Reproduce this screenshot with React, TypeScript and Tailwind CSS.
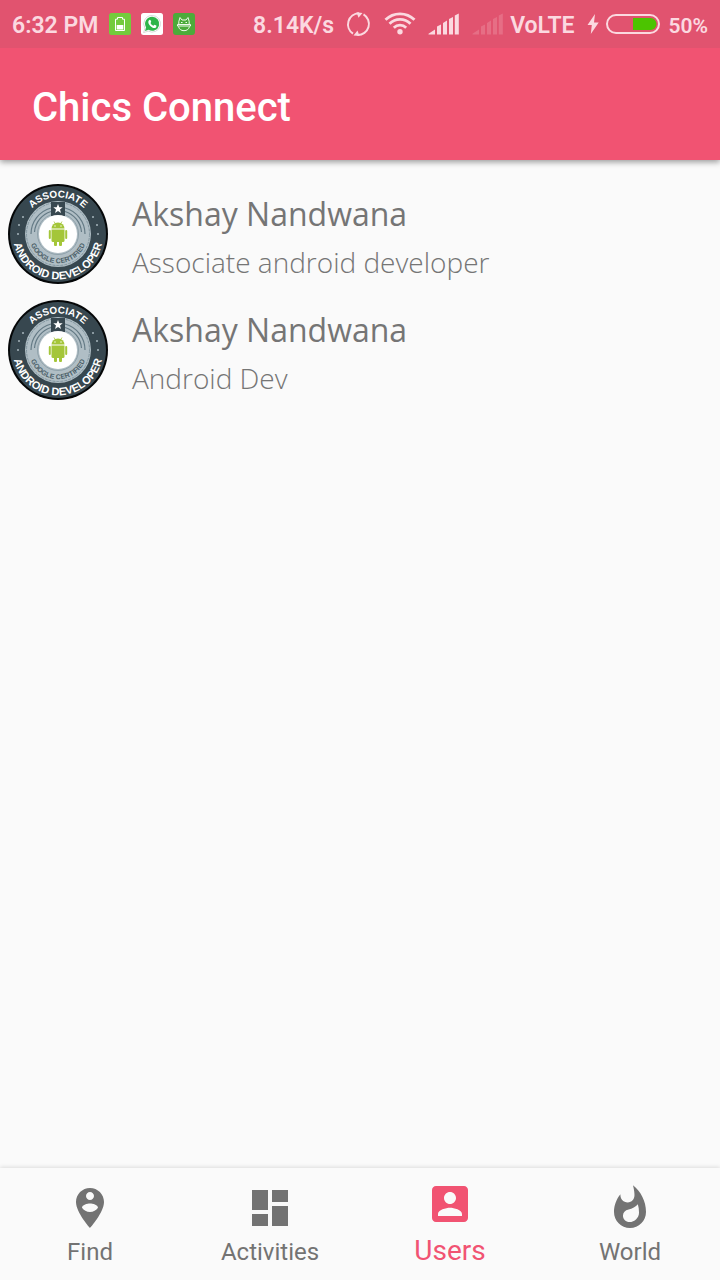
import { useId } from "react";

const users = [
  { name: "Akshay Nandwana", role: "Associate android developer" },
  { name: "Akshay Nandwana", role: "Android Dev" },
];

const tabs = [
  {
    label: "Find",
    path: "M12 2C8.14 2 5 5.14 5 9c0 5.25 7 13 7 13s7-7.75 7-13c0-3.86-3.14-7-7-7zm0 2c1.1 0 2 .9 2 2 0 1.11-.9 2-2 2s-2-.89-2-2c0-1.1.9-2 2-2zm0 10c-1.67 0-3.14-.85-4-2.15.02-1.32 2.67-2.05 4-2.05s3.98.73 4 2.05c-.86 1.3-2.33 2.15-4 2.15z",
  },
  {
    label: "Activities",
    path: "M3 13h8V3H3v10zm0 8h8v-6H3v6zm10 0h8V11h-8v10zm0-18v6h8V3h-8z",
  },
  {
    label: "Users",
    active: true,
    path: "M3 5v14c0 1.1.89 2 2 2h14c1.1 0 2-.9 2-2V5c0-1.1-.9-2-2-2H5c-1.11 0-2 .9-2 2zm12 4c0 1.66-1.34 3-3 3s-3-1.34-3-3 1.34-3 3-3 3 1.34 3 3zm-9 8c0-2 4-3.1 6-3.1s6 1.1 6 3.1v1H6v-1z",
  },
  {
    label: "World",
    path: "M13.5.67s.74 2.65.74 4.8c0 2.06-1.35 3.73-3.41 3.73-2.07 0-3.63-1.67-3.63-3.73l.03-.36C5.21 7.51 4 10.62 4 14c0 4.42 3.58 8 8 8s8-3.58 8-8C20 8.61 17.41 3.8 13.5.67zM11.71 19c-1.78 0-3.22-1.4-3.22-3.14 0-1.62 1.05-2.76 2.81-3.12 1.77-.36 3.6-1.21 4.62-2.58.39 1.29.59 2.65.59 4.04 0 2.65-2.15 4.8-4.8 4.8z",
  },
];

function BatteryAppIcon() {
  return (
    <svg className="size-6" viewBox="0 0 24 24" aria-hidden="true">
      <rect x="1" y="1" width="22" height="22" rx="2.5" fill="#73cb3c" />
      <path d="M9.5 5.5h5v1.700h2V18.500h-9V7.200h2z" fill="none" stroke="#fff" strokeWidth="1" />
      <path d="M8.700 13h6.600v4.500H8.700z" fill="#fff" />
    </svg>
  );
}

function WhatsAppIcon() {
  return (
    <svg className="size-6" viewBox="0 0 24 24" aria-hidden="true">
      <rect x="1" y="1" width="22" height="22" rx="2.5" fill="#fff" />
      <path d="M12.2 3.5a8.3 8.3 0 1 1-4 15.6L3.6 20.6 5 16.2a8.3 8.3 0 0 1 7.2-12.7z" fill="none" stroke="#c9c9c9" strokeWidth=".7" />
      <path d="M12.2 4.8a7 7 0 1 1-3.6 13L5 19l1.1-3.6A7 7 0 0 1 12.2 4.8z" fill="#2fb54a" />
      <path d="M9.400 8c.6-.4 1-.2 1.200.3l.6 1.400c.1.5-.7 1-.7 1.200.5 1.200 1.600 2.300 2.900 2.800.4 0 .8-1 1.200-.9l1.600.8c.5.3.2 1.400-.3 1.800-1.500 1.300-4 .1-5.600-1.500-1.600-1.500-3-4.500-.9-5.900z" fill="#fff" />
    </svg>
  );
}

function CatAppIcon() {
  return (
    <svg className="size-6" viewBox="0 0 24 24" aria-hidden="true">
      <rect x="1" y="1" width="22" height="22" rx="3" fill="#4cab3a" />
      <g fill="none" stroke="#f0faec" strokeWidth="1">
        <path d="M6.800 12.500V9.500L8 5.500l2 2.500h4l2-2.500 1.200 4v3" />
        <path d="M5.500 12.500h13v1.500h-13z" />
        <path d="M6.500 14.500c.6 2.700 2.700 4.200 5.500 4.200s4.900-1.500 5.500-4.200" />
        <path d="M9 10.500h1.500M13.500 10.500H15" />
      </g>
    </svg>
  );
}

function SyncIcon() {
  return (
    <svg className="size-7" viewBox="0 0 28 28" aria-hidden="true">
      <g fill="none" stroke="currentColor" strokeWidth="2">
        <path d="M9 23.700A11.200 11.200 0 0 1 15 3.200" />
        <path d="M19.500 4.300A11.200 11.200 0 0 1 13.500 25.100" />
      </g>
      <path d="M12.500 2.200 18.500 3 14.500 7.800zM15.500 26 9.500 25.500 13.500 20.500z" fill="currentColor" />
    </svg>
  );
}

function WifiIcon() {
  return (
    <svg className="h-6 w-8" viewBox="0 0 32 24" aria-hidden="true">
      <g fill="none" stroke="currentColor" strokeWidth="2.800">
        <path d="M1.500 7.800a20.500 20.500 0 0 1 29 0" />
        <path d="M5.500 11.700a14.800 14.800 0 0 1 21 0" />
        <path d="M9.800 15.700a8.800 8.800 0 0 1 12.400 0" />
      </g>
      <circle cx="16" cy="19.800" r="2.700" fill="currentColor" />
    </svg>
  );
}

function SignalIcon({ faded = false }: { faded?: boolean }) {
  return (
    <svg className={faded ? "h-6 w-8 opacity-20" : "h-6 w-8"} viewBox="0 0 32 24" aria-hidden="true">
      <path
        d="M.5 22.500v-.8L7 17.500v5zM9 22.500v-8l4-2v10zM15 22.500V11l4-2.500v14zM21 22.500V7l4-2v17.500zM26.800 22.500V3.500l4-2v21z"
        fill="currentColor"
      />
    </svg>
  );
}

function BoltIcon() {
  return (
    <svg className="h-6 w-3" viewBox="0 0 12 24" aria-hidden="true">
      <path d="M8 2 .5 13h4.300L3.800 22 11.700 10.500H7z" fill="currentColor" />
    </svg>
  );
}

function BatteryIcon() {
  return (
    <svg className="h-6 w-14" viewBox="0 0 56 24" aria-hidden="true">
      <rect x="2" y="3" width="52" height="18" rx="9" fill="none" stroke="currentColor" strokeWidth="2" />
      <path d="M28 6h17.500a6 6 0 0 1 0 12H28z" fill="#4cc400" />
    </svg>
  );
}

function Badge() {
  const id = useId();
  const dots = [
    [10, 50], [11, 41], [15, 33], [90, 50], [89, 41], [85, 33],
  ];
  return (
    <svg className="size-[100px] shrink-0" viewBox="0 0 100 100" role="img" aria-label="Associate Android Developer badge">
      <defs>
        <path id={`${id}top`} d="M13.500 50a36.500 36.500 0 0 1 73 0" />
        <path id={`${id}bottom`} d="M14 23.300A45 45 0 1 0 86 23.300" />
        <path id={`${id}inner`} d="M25.800 34.200A29 29 0 1 0 74.200 34.200" />
      </defs>
      <circle cx="50" cy="50" r="50" fill="#050708" />
      <circle cx="50" cy="50" r="48" fill="#37474f" />
      <circle cx="50" cy="50" r="33" fill="#b0bec5" />
      <circle cx="50" cy="50" r="31.500" fill="none" stroke="#8296a0" strokeWidth="1" strokeDasharray="3 1" />
      <circle cx="50" cy="50" r="20.500" fill="none" stroke="#8fa1aa" strokeWidth="1" />
      <g fill="none" stroke="#647a85">
        <path d="M23 50a27 27 0 0 1 20-26M57 24a27 27 0 0 1 20 26" strokeWidth="1.200" />
        <path d="M26.500 48a23.600 23.600 0 0 1 16.500-20.500M57 27.500a23.600 23.600 0 0 1 16.500 20.500" strokeWidth="1.200" />
      </g>
      <path d="M43 18h14v14H43z" fill="#37474f" />
      <path d="m50 20 1.300 3.200h3.400L52 25.400l1 3.600-3-2-3 2 1-3.600-2.700-2.200h3.400z" fill="#fff" />
      <circle cx="50" cy="50" r="19" fill="#fff" />
      <g fill="#a4c639">
        <path d="M43.500 44.500a6.500 6 0 0 1 13 0z" />
        <path d="M43.500 45.500h13v11a1.500 1.500 0 0 1-1.500 1.500H45a1.500 1.500 0 0 1-1.500-1.500z" />
        <rect x="40.800" y="46" width="2" height="9" rx="1" />
        <rect x="57.200" y="46" width="2" height="9" rx="1" />
        <rect x="46" y="56" width="3" height="6" rx="1" />
        <rect x="51" y="56" width="3" height="6" rx="1" />
        <path d="m46 37.500 1.500 2.500M54 37.500 52.500 40" stroke="#a4c639" strokeWidth=".8" />
      </g>
      <circle cx="47" cy="42" r=".7" fill="#fff" />
      <circle cx="53" cy="42" r=".7" fill="#fff" />
      {dots.map(([cx, cy]) => (
        <circle key={`${cx}-${cy}`} cx={cx} cy={cy} r="1" fill="#a7b4bb" />
      ))}
      <g textAnchor="middle" className="font-['Liberation_Sans',sans-serif] font-bold">
        <text fontSize="10" fill="#fff">
          <textPath href={`#${id}top`} startOffset="50%">ASSOCIATE</textPath>
        </text>
        <text fontSize="11" fill="#fff">
          <textPath href={`#${id}bottom`} startOffset="50%">ANDROID DEVELOPER</textPath>
        </text>
        <text fontSize="7" fill="#4b5e68">
          <textPath href={`#${id}inner`} startOffset="50%">GOOGLE CERTIFIED</textPath>
        </text>
      </g>
    </svg>
  );
}

export default function App() {
  return (
    <div className="flex min-h-screen flex-col bg-[#fafafa] font-[Roboto,sans-serif]">
      <header className="bg-[#f15372] shadow-[0_2px_6px_rgba(0,0,0,0.4)]">
        <div className="flex h-12 items-center justify-between bg-[#e1536f] px-3 text-[23px] leading-6 font-semibold text-[#fbd9e0]">
          <div className="flex items-center gap-2">
            <span className="mr-0.5 pt-1">6:32 PM</span>
            <BatteryAppIcon />
            <WhatsAppIcon />
            <CatAppIcon />
          </div>
          <div className="flex items-center">
            <span className="pt-1">8.14K/s</span>
            <span className="ml-2.5 flex items-center gap-3">
              <SyncIcon />
              <WifiIcon />
              <SignalIcon />
              <SignalIcon faded />
            </span>
            <span className="ml-1.5 pt-1">VoLTE</span>
            <span className="ml-3 flex items-center gap-1.5">
              <BoltIcon />
              <BatteryIcon />
            </span>
            <span className="ml-2 pt-1 text-[21px]">50%</span>
          </div>
        </div>
        <h1 className="flex h-28 items-center px-8 pt-2 text-[40px] leading-12 font-medium text-white">Chics Connect</h1>
      </header>

      <main className="flex-1 pt-4">
        <ul className="font-['Open_Sans',sans-serif] text-[#757575]">
          {users.map((user, index) => (
            <li key={index} className="flex items-center gap-6 p-2">
              <Badge />
              <div className="pt-1">
                <p className="text-[32px] leading-[52px]">{user.name}</p>
                <p className="text-[28px] leading-[44px] font-light">{user.role}</p>
              </div>
            </li>
          ))}
        </ul>
      </main>

      <nav className="grid h-28 grid-cols-4 bg-[#fafafa] shadow-[0_-1px_4px_rgba(0,0,0,0.12)]">
        {tabs.map((tab) => (
          <button
            key={tab.label}
            type="button"
            aria-current={tab.active ? "page" : undefined}
            className={
              tab.active
                ? "flex flex-col items-center pt-3 text-[28px] leading-[46px] text-[#f15372]"
                : "flex flex-col items-center pt-4 text-[24px] leading-10 text-[#737373]"
            }
          >
            <svg className="size-12" viewBox="0 0 24 24" fill="currentColor" aria-hidden="true">
              <path d={tab.path} />
            </svg>
            {tab.label}
          </button>
        ))}
      </nav>
    </div>
  );
}
